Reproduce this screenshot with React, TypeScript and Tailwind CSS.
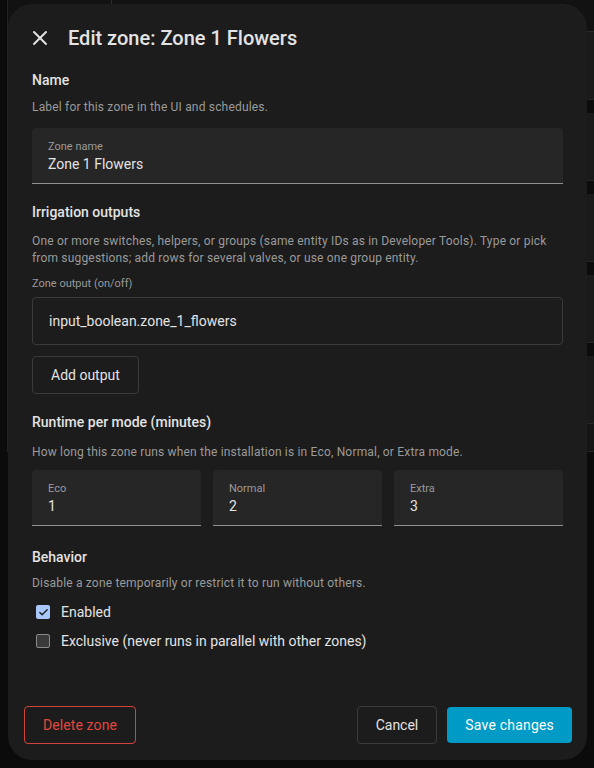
import { X, Check } from "lucide-react";

const font = { fontFamily: "Roboto, 'Noto Sans', sans-serif" };

function FilledField({ label, value }: { label: string; value: string }) {
  return (
    <div className="flex h-[56px] flex-col rounded-t-[4px] border-b border-[#8f8f8f] bg-[#262626] px-4 pt-[12px]">
      <span className="text-[11px] leading-[14px] text-[#9a9a9a]">{label}</span>
      <span className="mt-[1px] text-[14px] leading-[18px] text-[#e3e3e3]">{value}</span>
    </div>
  );
}

function SectionTitle({ children }: { children: React.ReactNode }) {
  return <h2 className="text-[14px] font-medium leading-[20px] text-[#e3e3e3]">{children}</h2>;
}

function Hint({ children }: { children: React.ReactNode }) {
  return <p className="text-[12px] leading-[17px] tracking-[0.18px] text-[#9a9a9a]">{children}</p>;
}

function CheckRow({ checked, label }: { checked: boolean; label: string }) {
  return (
    <label className="flex items-center gap-[11px] pl-1">
      {checked ? (
        <span className="flex h-[14px] w-[14px] items-center justify-center rounded-[2px] bg-[#a8c7fa]">
          <Check size={11} strokeWidth={3} className="text-[#1c1c1c]" />
        </span>
      ) : (
        <span className="h-[14px] w-[14px] rounded-[2px] border border-[#8a8a8a] bg-[#3a3a3a]" />
      )}
      <span className="text-[14px] leading-[20px] text-[#e3e3e3]">{label}</span>
    </label>
  );
}

export default function App() {
  const rows = [0, 1, 2, 3, 4];

  return (
    <div className="relative h-[768px] w-[594px] overflow-hidden bg-[#0b0b0b]" style={font}>
      {/* Page behind the dialog, dimmed */}
      <div className="ml-[7px] -mt-[20px] w-[700px] border-l border-[#222] bg-[#121212]">
        <div className="flex h-[52px] items-end border-b border-[#2a2a2a]">
          <span className="w-[103px] pb-[34px] pl-[26px] text-[14px] text-[#8a8a8a]">Add zone</span>
          <span className="h-[32px] border-l border-[#2c2c2c]" />
        </div>
        <div className="flex flex-col gap-[13px] bg-[#0c0c0c]">
          {rows.map((r) => (
            <div key={r} className="h-[68px] border-b border-[#262626] bg-[#1a1a1a]" />
          ))}
        </div>
        <div className="h-[28px] border-b border-[#262626] bg-[#151515]" />
      </div>

      {/* Dialog */}
      <div className="absolute left-[8px] top-[4px] flex h-[756px] w-[579px] flex-col rounded-[24px] bg-[#1c1c1c]">
        <div className="flex items-center gap-4 px-5 pt-5">
          <X size={24} strokeWidth={2} className="text-[#e3e3e3]" />
          <h1 className="text-[20px] font-medium leading-[28px] text-[#e3e3e3]">Edit zone: Zone 1 Flowers</h1>
        </div>

        <div className="flex flex-col px-6">
          <div className="mt-[18px]">
            <SectionTitle>Name</SectionTitle>
          </div>
          <div className="mt-[9px]">
            <Hint>Label for this zone in the UI and schedules.</Hint>
          </div>
          <div className="mt-[12px]">
            <FilledField label="Zone name" value="Zone 1 Flowers" />
          </div>

          <div className="mt-[18px]">
            <SectionTitle>Irrigation outputs</SectionTitle>
          </div>
          <div className="mt-[11px]">
            <Hint>
              One or more switches, helpers, or groups (same entity IDs as in Developer Tools). Type or pick from
              suggestions; add rows for several valves, or use one group entity.
            </Hint>
          </div>
          <span className="mt-[10px] text-[11px] leading-[14px] text-[#9a9a9a]">Zone output (on/off)</span>
          <div className="mt-[6px] flex h-[48px] items-center rounded-[4px] border border-[#3a3a3a] px-4">
            <span className="text-[14px] text-[#e3e3e3]">input_boolean.zone_1_flowers</span>
          </div>
          <div className="mt-[11px]">
            <button className="h-[38px] rounded-[4px] border border-[#3a3a3a] px-[18px] text-[14px] text-[#e3e3e3]">
              Add output
            </button>
          </div>

          <div className="mt-[18px]">
            <SectionTitle>Runtime per mode (minutes)</SectionTitle>
          </div>
          <div className="mt-[12px]">
            <Hint>How long this zone runs when the installation is in Eco, Normal, or Extra mode.</Hint>
          </div>
          <div className="mt-[9px] grid grid-cols-3 gap-3">
            <FilledField label="Eco" value="1" />
            <FilledField label="Normal" value="2" />
            <FilledField label="Extra" value="3" />
          </div>

          <div className="mt-[21px]">
            <SectionTitle>Behavior</SectionTitle>
          </div>
          <div className="mt-[8px]">
            <Hint>Disable a zone temporarily or restrict it to run without others.</Hint>
          </div>
          <div className="mt-[10px] flex flex-col gap-[9px]">
            <CheckRow checked label="Enabled" />
            <CheckRow checked={false} label="Exclusive (never runs in parallel with other zones)" />
          </div>
        </div>

        <div className="mt-auto flex items-center justify-between pb-4 pl-4 pr-[15px]">
          <button className="h-[38px] rounded-[4px] border border-[#d2443a] px-[18px] text-[14px] tracking-[0.1px] text-[#e0483d]">
            Delete zone
          </button>
          <div className="flex items-center gap-[10px]">
            <button className="h-[38px] rounded-[4px] border border-[#3a3a3a] px-[18px] text-[14px] text-[#e3e3e3]">
              Cancel
            </button>
            <button className="h-[36px] rounded-[4px] bg-[#009ac7] px-[18px] text-[14px] tracking-[0.2px] text-white">
              Save changes
            </button>
          </div>
        </div>
      </div>
    </div>
  );
}
